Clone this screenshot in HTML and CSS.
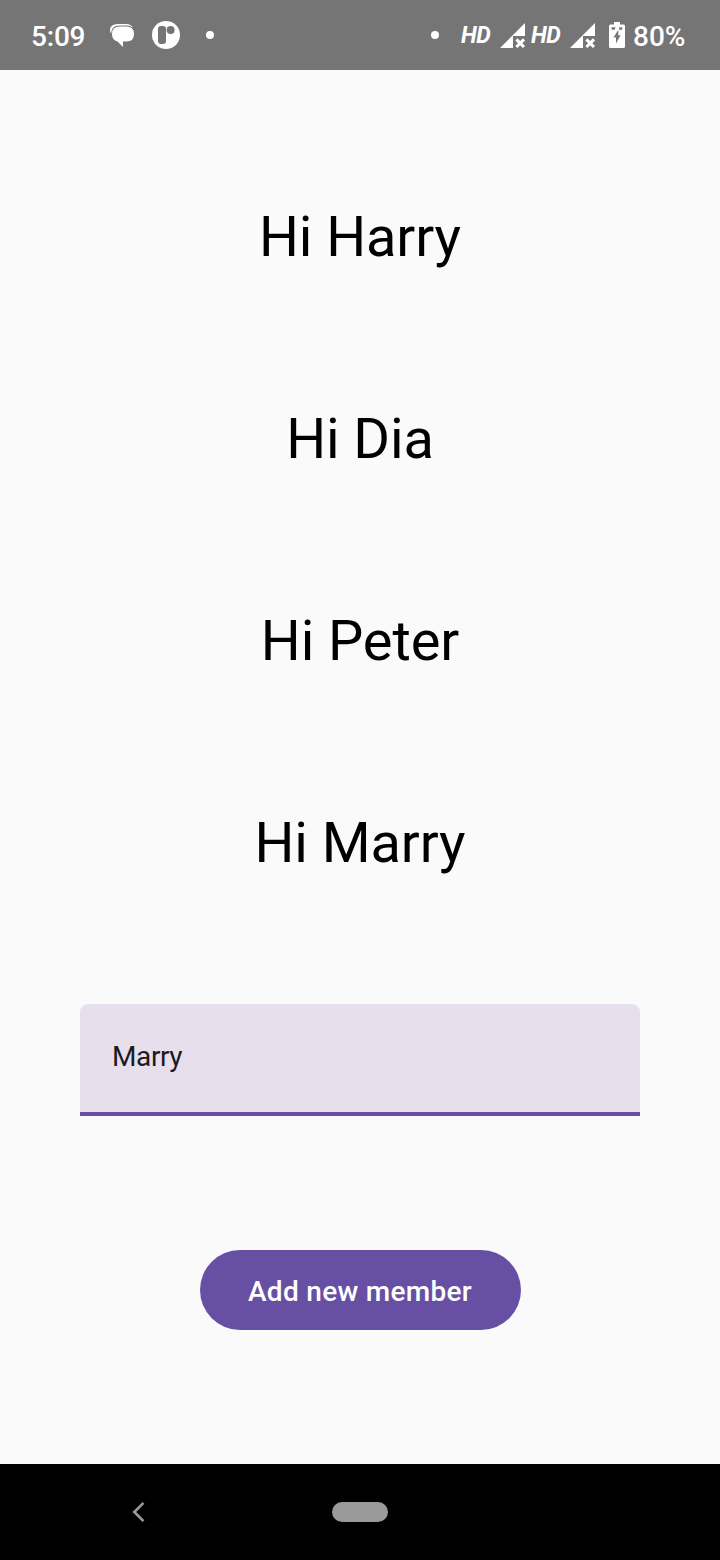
FILE: index.html
```
<!DOCTYPE html>
<html lang="en">
<head>
<meta charset="utf-8">
<meta name="viewport" content="width=device-width">
<title>Members</title>
<link rel="stylesheet" href="styles.css">
</head>
<body>
<div class="screen">
  <header class="status-bar">
    <div class="status-left">
      <span class="status-text">5:09</span>
      <svg class="icon-chat" width="26" height="26" viewBox="0 0 26 26"><path class="fill" d="M7.5 1H16Q20.5 1 22.5 4V8L4 13L1.5 11Q0 9.5 0 7.5Q0 1 7.5 1Z"/><path class="bubble" d="M9.5 3.5H16.5Q24 3.5 24 11Q24 18.5 16.5 18.5H13V24L7.5 18.5Q2 17 2 11Q2 3.5 9.5 3.5Z"/></svg>
      <svg class="icon-circle" width="28" height="28" viewBox="0 0 28 28"><circle class="fill" cx="14" cy="14" r="14"/><rect class="cutout" x="6" y="5" width="8" height="18" rx="3"/><circle class="cutout" cx="18.6" cy="9" r="4"/></svg>
      <span class="dot"></span>
    </div>
    <div class="status-right">
      <span class="dot"></span>
      <span class="hd">HD</span>
      <svg class="signal" width="26" height="26" viewBox="0 0 26 26"><path class="fill" d="M0 25L25 0V13H13V25Z"/><path class="cross" d="M16.4 16.4L24 24M24 16.4L16.4 24"/></svg>
      <span class="hd hd-second">HD</span>
      <svg class="signal" width="26" height="26" viewBox="0 0 26 26"><path class="fill" d="M0 25L25 0V13H13V25Z"/><path class="cross" d="M16.4 16.4L24 24M24 16.4L16.4 24"/></svg>
      <svg class="battery" width="16" height="26" viewBox="0 0 16 26"><path class="fill" d="M5 0H11V2.5H14.5Q16 2.5 16 4V24.5Q16 26 14.5 26H1.5Q0 26 0 24.5V4Q0 2.5 1.5 2.5H5Z"/><path class="cutout" d="M2.6 5.3H6.6L5.6 7.8H2.6ZM10.2 5.3H13.2V7.8H10.2ZM9.3 7.8V13.2H11.6L7 21.5V15.6H4.6Z"/></svg>
      <span class="status-text percent">80%</span>
    </div>
  </header>
  <main class="content">
    <p class="greeting">Hi Harry</p>
    <p class="greeting">Hi Dia</p>
    <p class="greeting">Hi Peter</p>
    <p class="greeting">Hi Marry</p>
    <input class="name-field" type="text" value="Marry" aria-label="Member name">
    <button class="add-button" type="button">Add new member</button>
  </main>
  <nav class="nav-bar">
    <svg class="back" width="14" height="22" viewBox="0 0 14 22"><path d="M11.5 1.8L2.3 11L11.5 20.2"/></svg>
    <span class="home-pill"></span>
  </nav>
</div>
</body>
</html>
```
FILE: styles.css
```
* { box-sizing: border-box; }
body { margin: 0; font-family: Roboto, "Liberation Sans", sans-serif; }
svg { display: block; flex: none; }
.screen { width: 720px; height: 1560px; display: flex; flex-direction: column; background: #fafafa; }

.status-bar { height: 70px; display: flex; justify-content: space-between; align-items: center; padding: 0 35px 0 31px; background: #757575; color: #fff; }
.status-left, .status-right { display: flex; align-items: center; }
.status-text { font-size: 28px; font-weight: 500; line-height: 34px; padding-top: 4px; white-space: nowrap; }
.status-left .status-text { width: 79px; letter-spacing: -0.2px; }
.icon-chat { margin-right: 16px; margin-top: 2px; }
.icon-circle { margin-right: 26px; }
.fill { fill: #fff; }
.cutout { fill: #757575; }
.bubble { fill: #fff; stroke: #757575; stroke-width: 2; paint-order: stroke; }
.cross { fill: none; stroke: #fff; stroke-width: 3; }
.dot { width: 8px; height: 8px; border-radius: 50%; background: #fff; flex: none; }
.hd { width: 39px; margin-left: 22px; padding-top: 2px; font-size: 23px; font-weight: 700; font-style: italic; line-height: 28px; letter-spacing: -0.5px; }
.hd-second { width: 39px; margin-left: 5px; }
.signal { margin-top: 1px; }
.battery { margin-left: 13px; }
.percent { margin-left: 8px; width: 52px; }

.content { flex: 1; display: flex; flex-direction: column; align-items: center; padding-top: 134px; }
.greeting { margin: 0 0 136px; font-size: 56px; line-height: 66px; letter-spacing: -0.1px; color: #000; }
.name-field { width: 560px; height: 112px; margin: -8px 0 134px; padding: 0 32px 4px; border: 0; border-bottom: 4px solid #6750a4; border-radius: 8px 8px 0 0; background: #e7e0ec; color: #1c1b1f; font: 400 28px/34px Roboto, sans-serif; letter-spacing: -0.4px; outline: none; }
.add-button { width: 321px; height: 80px; padding: 4px 0 0; border: 0; border-radius: 40px; background: #6750a4; color: #fff; font: 500 28px/40px Roboto, sans-serif; letter-spacing: 0.3px; white-space: nowrap; }

.nav-bar { height: 96px; display: flex; align-items: center; padding-left: 132px; background: #000; }
.back { fill: none; stroke: #999; stroke-width: 2.6; }
.home-pill { width: 56px; height: 20px; margin-left: 186px; border-radius: 10px; background: #999; }
```
